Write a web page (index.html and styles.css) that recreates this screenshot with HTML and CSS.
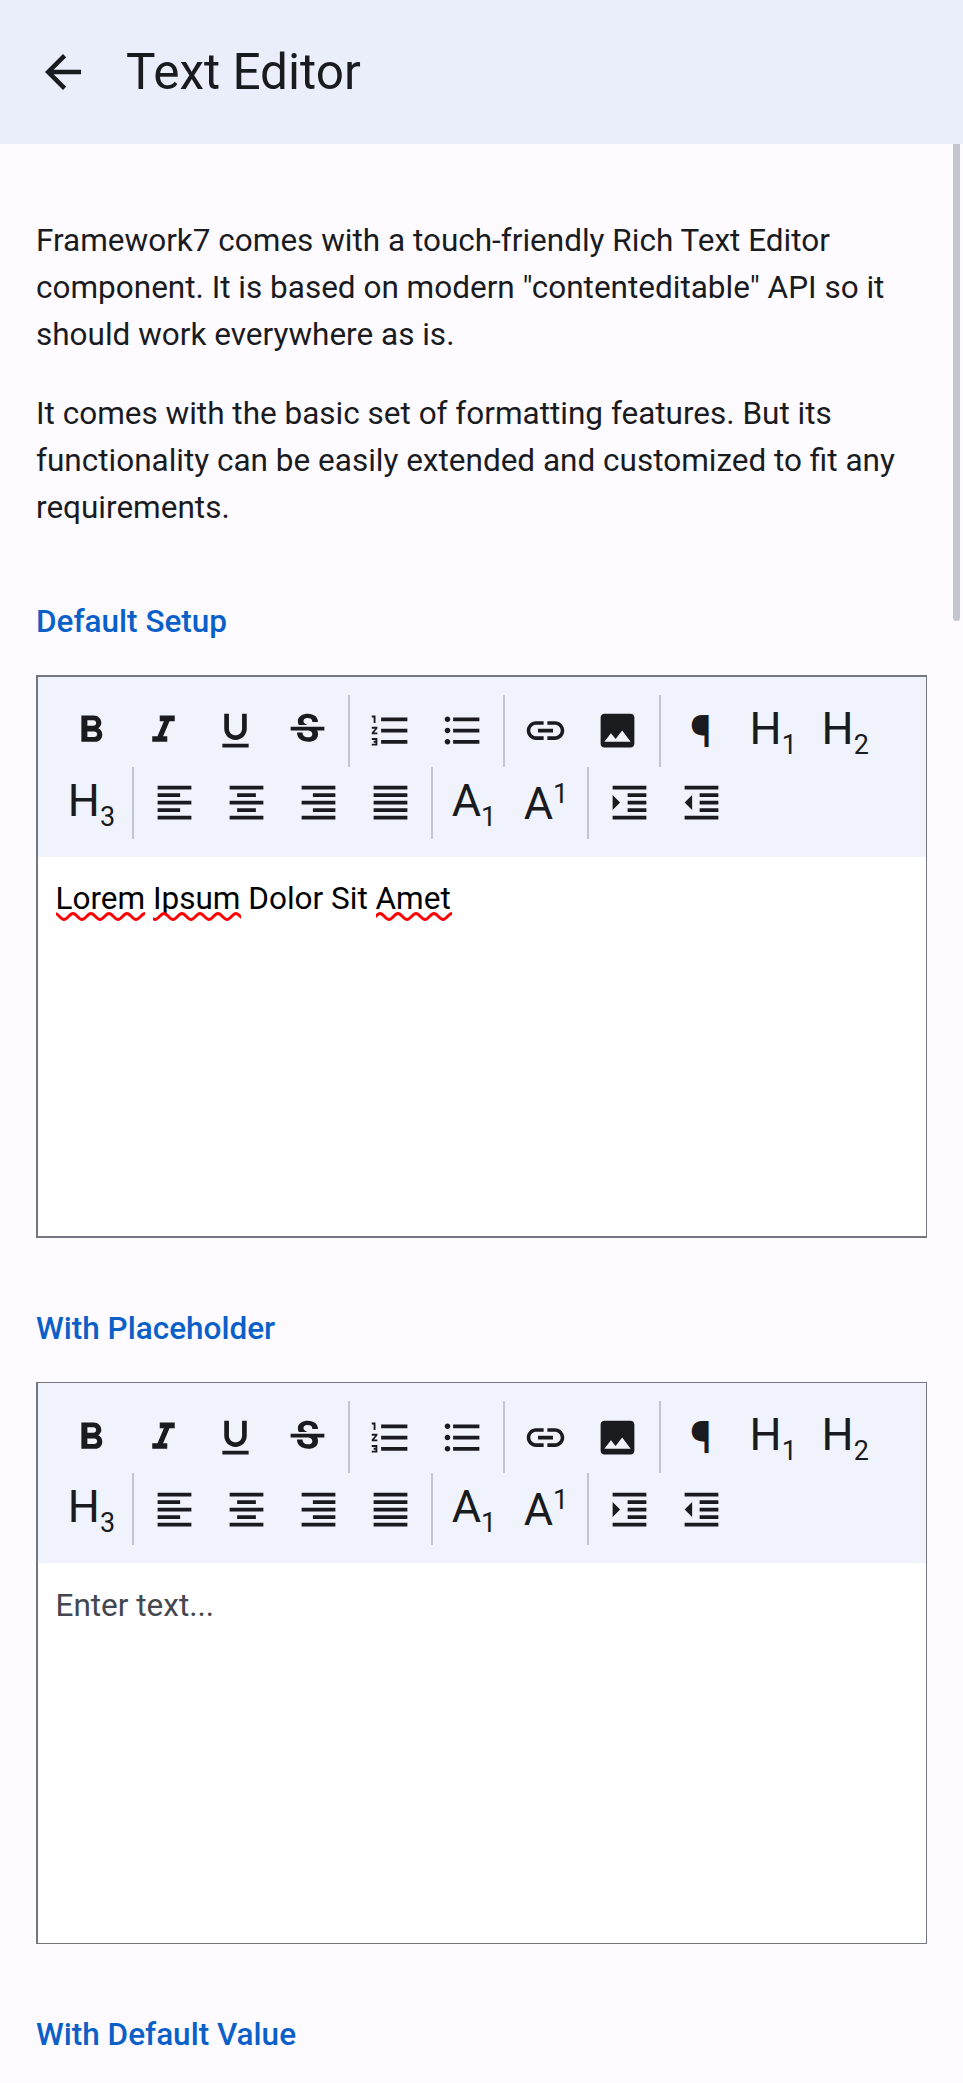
FILE: index.html
```html
<!DOCTYPE html>
<html lang="en">
<head>
<meta charset="utf-8">
<title>Text Editor</title>
<link rel="stylesheet" href="styles.css">
</head>
<body>
<svg class="defs" aria-hidden="true">
  <symbol id="i-bold" viewBox="0 0 24 24"><path d="M15.6 10.79c.97-.67 1.65-1.77 1.65-2.79 0-2.26-1.75-4-4-4H6.600v14h7.440c2.09 0 3.710-1.700 3.710-3.790 0-1.520-.860-2.820-2.150-3.420zM9.800 6.500h3.200c.83 0 1.500.670 1.500 1.500s-.670 1.500-1.500 1.500H9.800zm3.700 9H9.800v-3h3.700c.83 0 1.500.670 1.500 1.500s-.670 1.500-1.500 1.500z"/></symbol>
  <symbol id="i-italic" viewBox="0 0 24 24"><path d="M10 4v3h2.210l-3.420 8H6v3h8v-3h-2.210l3.420-8H18V4z"/></symbol>
  <symbol id="i-underline" viewBox="0 0 24 24"><path d="M12 17c3.310 0 6-2.690 6-6V3h-2.500v8c0 1.930-1.570 3.500-3.500 3.500S8.500 12.930 8.500 11V3H6v8c0 3.310 2.690 6 6 6zm-7 2v2h14v-2H5z"/></symbol>
  <symbol id="i-strike" viewBox="0 0 24 24"><path d="M6.850 7.080C6.850 4.370 9.450 3 12.240 3c1.640 0 3 .490 3.900 1.280.770.650 1.460 1.730 1.460 3.240h-3.010c0-.310-.050-.590-.150-.850-.290-.860-1.200-1.280-2.250-1.280-1.860 0-2.340 1.020-2.340 1.700 0 .480.250.880.740 1.210.380.250.770.480 1.410.700H7.390c-.210-.340-.540-.890-.540-1.920zM21 12v-2H3v2h9.620c1.150.450 1.960.750 1.960 1.970 0 1-.810 1.670-2.280 1.670-1.540 0-2.930-.540-2.930-2.510H6.400c0 .550.080 1.130.240 1.580.810 2.290 3.290 3.300 5.670 3.300 2.270 0 5.300-.890 5.300-4.050 0-.300-.010-1.160-.480-1.940H21z"/></symbol>
  <symbol id="i-ol" viewBox="0 0 24 24"><path d="M2 17h2v.5H3v1h1v.5H2v1h3v-4H2v1zm1-9h1V4H2v1h1v3zm-1 3h1.800L2 13.100v.9h3v-1H3.200L5 10.900V10H2v1zm5-6v2h14V5H7zm0 14h14v-2H7v2zm0-6h14v-2H7v2z"/></symbol>
  <symbol id="i-ul" viewBox="0 0 24 24"><path d="M4 10.500c-.83 0-1.500.670-1.500 1.500s.670 1.500 1.500 1.500 1.500-.670 1.500-1.500-.670-1.500-1.500-1.500zm0-6c-.83 0-1.500.670-1.500 1.500S3.170 7.500 4 7.500 5.500 6.830 5.500 6 4.830 4.500 4 4.500zm0 12c-.83 0-1.500.680-1.500 1.500s.680 1.500 1.500 1.500 1.500-.680 1.500-1.500-.670-1.500-1.500-1.500zM7 19h14v-2H7v2zm0-6h14v-2H7v2zm0-8v2h14V5H7z"/></symbol>
  <symbol id="i-link" viewBox="0 0 24 24"><path d="M3.900 12c0-1.710 1.390-3.100 3.100-3.100h4V7H7c-2.760 0-5 2.240-5 5s2.240 5 5 5h4v-1.900H7c-1.710 0-3.100-1.390-3.100-3.100zM8 13h8v-2H8v2zm9-6h-4v1.900h4c1.710 0 3.100 1.390 3.100 3.100s-1.390 3.100-3.100 3.100h-4V17h4c2.760 0 5-2.240 5-5s-2.240-5-5-5z"/></symbol>
  <symbol id="i-image" viewBox="0 0 24 24"><path d="M21 19V5c0-1.100-.9-2-2-2H5c-1.100 0-2 .9-2 2v14c0 1.100.9 2 2 2h14c1.100 0 2-.9 2-2zM8.500 13.500l2.500 3.010L14.500 12l4.500 6H5l3.500-4.500z"/></symbol>
  <symbol id="i-left" viewBox="0 0 24 24"><path d="M15 15H3v2h12v-2zm0-8H3v2h12V7zM3 13h18v-2H3v2zm0 8h18v-2H3v2zM3 3v2h18V3H3z"/></symbol>
  <symbol id="i-center" viewBox="0 0 24 24"><path d="M7 15v2h10v-2H7zm-4 6h18v-2H3v2zm0-8h18v-2H3v2zm4-6v2h10V7H7zM3 3v2h18V3H3z"/></symbol>
  <symbol id="i-right" viewBox="0 0 24 24"><path d="M3 21h18v-2H3v2zm6-4h12v-2H9v2zm-6-4h18v-2H3v2zm6-4h12V7H9v2zM3 3v2h18V3H3z"/></symbol>
  <symbol id="i-justify" viewBox="0 0 24 24"><path d="M3 21h18v-2H3v2zm0-4h18v-2H3v2zm0-4h18v-2H3v2zm0-4h18V7H3v2zm0-6v2h18V3H3z"/></symbol>
  <symbol id="i-indent" viewBox="0 0 24 24"><path d="M3 21h18v-2H3v2zM3 8v8l4-4-4-4zm8 9h10v-2H11v2zM3 3v2h18V3H3zm8 6h10V7H11v2zm0 4h10v-2H11v2z"/></symbol>
  <symbol id="i-outdent" viewBox="0 0 24 24"><path d="M11 17h10v-2H11v2zm-8-5l4 4V8l-4 4zm0 9h18v-2H3v2zM3 3v2h18V3H3zm8 6h10V7H11v2zm0 4h10v-2H11v2z"/></symbol>
</svg>

<header class="navbar">
  <svg class="back" viewBox="0 0 24 24"><path d="M20 11H7.830l5.590-5.590L12 4l-8 8 8 8 1.410-1.410L7.830 13H20v-2z"/></svg>
  <h1 class="title">Text Editor</h1>
</header>

<main class="page">
  <div class="scrollbar"></div>
  <div class="block">
    <p>Framework7 comes with a touch-friendly Rich Text Editor component. It is based on modern "contenteditable" API so it should work everywhere as is.</p>
    <p>It comes with the basic set of formatting features. But its functionality can be easily extended and customized to fit any requirements.</p>
  </div>

  <h2 class="block-title">Default Setup</h2>
  <section class="editor">
    <div class="toolbar">
      <div class="row">
        <div class="group">
          <button class="btn"><svg><use href="#i-bold"/></svg></button>
          <button class="btn"><svg><use href="#i-italic"/></svg></button>
          <button class="btn"><svg><use href="#i-underline"/></svg></button>
          <button class="btn"><svg><use href="#i-strike"/></svg></button>
        </div>
        <div class="group">
          <button class="btn"><svg><use href="#i-ol"/></svg></button>
          <button class="btn"><svg><use href="#i-ul"/></svg></button>
        </div>
        <div class="group">
          <button class="btn"><svg><use href="#i-link"/></svg></button>
          <button class="btn"><svg><use href="#i-image"/></svg></button>
        </div>
        <div class="group">
          <button class="btn"><span>¶</span></button>
          <button class="btn"><span>H<sub>1</sub></span></button>
          <button class="btn"><span>H<sub>2</sub></span></button>
        </div>
      </div>
      <div class="row">
        <div class="group">
          <button class="btn"><span>H<sub>3</sub></span></button>
        </div>
        <div class="group">
          <button class="btn"><svg><use href="#i-left"/></svg></button>
          <button class="btn"><svg><use href="#i-center"/></svg></button>
          <button class="btn"><svg><use href="#i-right"/></svg></button>
          <button class="btn"><svg><use href="#i-justify"/></svg></button>
        </div>
        <div class="group">
          <button class="btn"><span>A<sub>1</sub></span></button>
          <button class="btn"><span>A<sup>1</sup></span></button>
        </div>
        <div class="group">
          <button class="btn"><svg><use href="#i-indent"/></svg></button>
          <button class="btn"><svg><use href="#i-outdent"/></svg></button>
        </div>
      </div>
    </div>
    <div class="content"><span class="misspelt">Lorem<svg><path d="M-1 1.500c3.500 0 5.500 6 9 6s5.500-6 9-6 5.500 6 9 6 5.500-6 9-6 5.500 6 9 6 5.500-6 9-6 5.500 6 9 6 5.500-6 9-6 5.500 6 9 6 5.500-6 9-6"/></svg></span> <span class="misspelt">Ipsum<svg><path d="M-7 1.500c3.500 0 5.500 6 9 6s5.500-6 9-6 5.500 6 9 6 5.500-6 9-6 5.500 6 9 6 5.500-6 9-6 5.500 6 9 6 5.500-6 9-6 5.500 6 9 6 5.500-6 9-6 5.500 6 9 6"/></svg></span> Dolor Sit <span class="misspelt">Amet<svg><path d="M-5 7.500c3.500 0 5.500-6 9-6s5.500 6 9 6 5.500-6 9-6 5.500 6 9 6 5.500-6 9-6 5.500 6 9 6 5.500-6 9-6 5.500 6 9 6 5.500-6 9-6"/></svg></span></div>
  </section>

  <h2 class="block-title">With Placeholder</h2>
  <section class="editor thin">
    <div class="toolbar">
      <div class="row">
        <div class="group">
          <button class="btn"><svg><use href="#i-bold"/></svg></button>
          <button class="btn"><svg><use href="#i-italic"/></svg></button>
          <button class="btn"><svg><use href="#i-underline"/></svg></button>
          <button class="btn"><svg><use href="#i-strike"/></svg></button>
        </div>
        <div class="group">
          <button class="btn"><svg><use href="#i-ol"/></svg></button>
          <button class="btn"><svg><use href="#i-ul"/></svg></button>
        </div>
        <div class="group">
          <button class="btn"><svg><use href="#i-link"/></svg></button>
          <button class="btn"><svg><use href="#i-image"/></svg></button>
        </div>
        <div class="group">
          <button class="btn"><span>¶</span></button>
          <button class="btn"><span>H<sub>1</sub></span></button>
          <button class="btn"><span>H<sub>2</sub></span></button>
        </div>
      </div>
      <div class="row">
        <div class="group">
          <button class="btn"><span>H<sub>3</sub></span></button>
        </div>
        <div class="group">
          <button class="btn"><svg><use href="#i-left"/></svg></button>
          <button class="btn"><svg><use href="#i-center"/></svg></button>
          <button class="btn"><svg><use href="#i-right"/></svg></button>
          <button class="btn"><svg><use href="#i-justify"/></svg></button>
        </div>
        <div class="group">
          <button class="btn"><span>A<sub>1</sub></span></button>
          <button class="btn"><span>A<sup>1</sup></span></button>
        </div>
        <div class="group">
          <button class="btn"><svg><use href="#i-indent"/></svg></button>
          <button class="btn"><svg><use href="#i-outdent"/></svg></button>
        </div>
      </div>
    </div>
    <div class="content placeholder">Enter text...</div>
  </section>

  <h2 class="block-title">With Default Value</h2>
</main>
</body>
</html>
```
FILE: styles.css
```css
* { box-sizing: border-box; }
html, body { margin: 0; height: 2083px; overflow: hidden; }
body {
  display: flex;
  flex-direction: column;
  background: #fdfbff;
  color: #1a1b1f;
  font-family: Roboto, "Liberation Sans", sans-serif;
  font-size: 31.5px;
  line-height: 47.25px;
}
.defs { position: absolute; width: 0; height: 0; }

.navbar {
  flex: none;
  display: flex;
  align-items: center;
  gap: 36px;
  height: 144px;
  padding: 0 36px;
  background: #e9eefa;
}
.back { width: 54px; height: 54px; fill: currentColor; }
.title { margin: 0; font-size: 49.5px; line-height: 63px; font-weight: 400; }

.page { position: relative; flex: 1; min-height: 0; overflow: hidden; padding: 72.600px 36px 0; }
.scrollbar {
  position: absolute;
  top: 0;
  right: 3px;
  width: 7px;
  height: 477px;
  border-radius: 0 0 4px 4px;
  background: #c4c6cf;
}
.block { height: 315px; margin-bottom: -.6px; }
.block p { margin: 0 0 31.5px; }
.block p:last-child { margin-bottom: 0; }

.block-title {
  margin: 0;
  padding: 67px 0 30px;
  font-size: 31.5px;
  line-height: 47px;
  font-weight: 500;
  color: #0b60c8;
}

.editor {
  display: flex;
  flex-direction: column;
  height: 563px;
  border: 2px solid #74777f;
  border-right-width: 1px;
  background: #fff;
}
.editor.thin { height: 562px; border-top-width: 1px; border-bottom-width: 1px; }
.toolbar { padding: 18px 17.500px; background: #f0f3fc; }
.row { display: flex; height: 72px; }
.group { display: flex; }
.group + .group::before {
  content: "";
  width: 2px;
  margin: 0 4.650px 0 4.600px;
  background: #c4c6cf;
}
.btn {
  display: flex;
  align-items: center;
  justify-content: center;
  width: 72px;
  height: 72px;
  padding: 0;
  border: 0;
  background: none;
  color: inherit;
  font: 400 45px/45px Roboto, "Liberation Sans", sans-serif;
}
.btn svg { width: 45px; height: 45px; margin-bottom: 1px; fill: currentColor; }
.thin .btn svg { margin-bottom: 0; }
.btn sub, .btn sup { font-size: 27px; line-height: 24px; }

.content { flex: 1; padding: 18px 17.500px; color: #000; }
.content.placeholder { padding-top: 18.700px; color: #44474e; }
.misspelt { position: relative; display: inline-block; }
.misspelt svg {
  position: absolute;
  left: 0;
  top: 37px;
  width: calc(100% + 1px);
  height: 9px;
  fill: none;
  stroke: #f00;
  stroke-width: 2.800px;
}
```
